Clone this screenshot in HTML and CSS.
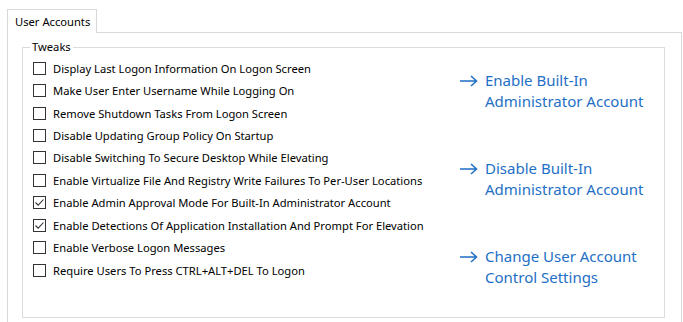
FILE: index.html
```html
<!DOCTYPE html>
<html lang="en">
<head>
    <meta charset="UTF-8">
    <title>User Accounts</title>
    <link rel="stylesheet" href="styles.css">
</head>
<body>

<div class="tabs">
    <div class="tab">User Accounts</div>
</div>

<div class="panel">
    <fieldset class="group">
        <legend>Tweaks</legend>
        <div class="cols">
            <ul class="checks">
                <li><span class="box"></span>Display Last Logon Information On Logon Screen</li>
                <li><span class="box"></span>Make User Enter Username While Logging On</li>
                <li><span class="box"></span>Remove Shutdown Tasks From Logon Screen</li>
                <li><span class="box"></span>Disable Updating Group Policy On Startup</li>
                <li><span class="box"></span>Disable Switching To Secure Desktop While Elevating</li>
                <li><span class="box"></span>Enable Virtualize File And Registry Write Failures To Per-User Locations</li>
                <li><span class="box"><svg viewBox="0 0 11 11"><path d="M1.5 5.5 L4.2 8.2 L9.5 2.5" /></svg></span>Enable Admin Approval Mode For Built-In Administrator Account</li>
                <li><span class="box"><svg viewBox="0 0 11 11"><path d="M1.5 5.5 L4.2 8.2 L9.5 2.5" /></svg></span>Enable Detections Of Application Installation And Prompt For Elevation</li>
                <li><span class="box"></span>Enable Verbose Logon Messages</li>
                <li><span class="box"></span>Require Users To Press CTRL+ALT+DEL To Logon</li>
            </ul>
            <div class="links">
                <a class="link" href="#">
                    <svg class="arrow" viewBox="0 0 18 12"><path d="M0 6 H16 M11 1 L16.5 6 L11 11" /></svg>
                    <span>Enable Built-In<br>Administrator Account</span>
                </a>
                <a class="link" href="#">
                    <svg class="arrow" viewBox="0 0 18 12"><path d="M0 6 H16 M11 1 L16.5 6 L11 11" /></svg>
                    <span>Disable Built-In<br>Administrator Account</span>
                </a>
                <a class="link" href="#">
                    <svg class="arrow" viewBox="0 0 18 12"><path d="M0 6 H16 M11 1 L16.5 6 L11 11" /></svg>
                    <span>Change User Account<br>Control Settings</span>
                </a>
            </div>
        </div>
    </fieldset>
</div>

</body>
</html>
```

FILE: styles.css
```css
body {
    margin: 0;
    background: #fff;
    font-family: "Noto Sans", "Open Sans", sans-serif;
    font-size: 11.2px;
    color: #000;
    overflow: hidden;
}
.tabs {
    display: flex;
    padding: 9px 0 0 7px;
}
.tab {
    border: 1px solid #d9d9d9;
    border-bottom: none;
    padding: 3px 6px 0 7px;
    height: 20px;
    line-height: 18px;
    background: #fff;
    margin-bottom: -1px;
    position: relative;
}
.panel {
    margin: 0 1px 0 7px;
    border: 1px solid #d9d9d9;
    padding: 6px 16px 0 14px;
    height: 283px;
}
.group {
    margin: 0;
    border: 1px solid #dcdcdc;
    padding: 2px 0 0 10px;
    height: 275px;
}
.group legend {
    padding: 0 2px;
    margin-left: -3px;
    line-height: 16px;
}
.cols {
    display: flex;
}
.checks {
    list-style: none;
    margin: 0;
    padding: 0;
    width: 427px;
}
.checks li {
    display: flex;
    align-items: center;
    height: 22.45px;
    white-space: nowrap;
}
.box {
    width: 11px;
    height: 11px;
    border: 1px solid #333;
    margin-right: 7px;
    flex: none;
    display: flex;
}
.box svg {
    width: 11px;
    height: 11px;
    fill: none;
    stroke: #333;
    stroke-width: 1.1;
}
.links {
    display: flex;
    flex-direction: column;
    padding-top: 13px;
}
.link {
    display: flex;
    align-items: flex-start;
    height: 88px;
    color: #1e6fc6;
    text-decoration: none;
    font-size: 15px;
    line-height: 21px;
}
.arrow {
    width: 18px;
    height: 12px;
    margin: 5px 7px 0 0;
    fill: none;
    stroke: #1e6fc6;
    stroke-width: 1.5;
    flex: none;
}
```
